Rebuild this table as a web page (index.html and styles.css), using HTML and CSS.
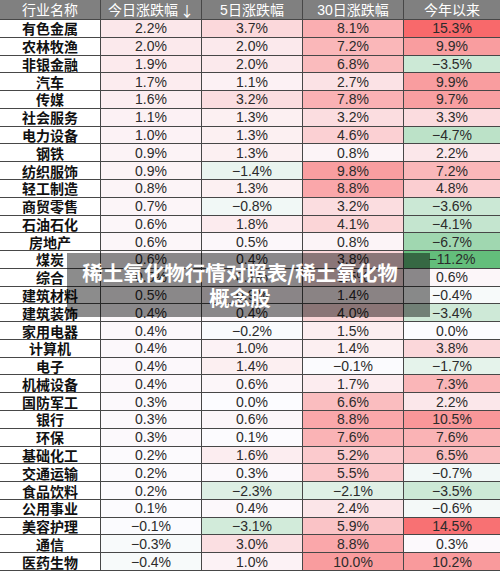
FILE: index.html
```html
<!DOCTYPE html>
<html lang="zh-CN">
<head>
<meta charset="utf-8">
<title>稀土氧化物行情对照表</title>
<link rel="stylesheet" href="styles.css">
</head>
<body>
<div class="page">
  <div class="table" id="table">
    <div class="cell head">行业名称</div>
    <div class="cell head">今日涨跌幅<span class="arrow">↓</span></div>
    <div class="cell head">5日涨跌幅</div>
    <div class="cell head">30日涨跌幅</div>
    <div class="cell head last">今年以来</div>
  </div>
  <div class="title">
    <span>稀土氧化物行情对照表/稀土氧化物</span>
    <span>概念股</span>
  </div>
</div>
<script src="script.js"></script>
</body>
</html>
```

FILE: styles.css
```css
html, body {
  margin: 0;
  padding: 0;
  background: #ffffff;
}

.page {
  position: relative;
  width: 500px;
  height: 571px;
  overflow: hidden;
  font-family: "Liberation Sans", "Noto Sans CJK SC", sans-serif;
}

.table {
  display: grid;
  grid-template-columns: 101px 101px 101px 101px 96px;
  grid-template-rows: 20px repeat(31, 1fr);
  width: 500px;
  height: 571px;
}

.cell {
  box-sizing: border-box;
  display: flex;
  align-items: center;
  justify-content: center;
  border-right: 1px solid #474747;
  border-bottom: 1px solid #474747;
  font-size: 14px;
  color: #2b2b2b;
  white-space: nowrap;
  line-height: 1;
}

.cell.last {
  border-right: none;
}

.head {
  background: #808080;
  color: #ffffff;
}

.arrow {
  font-family: "Noto Sans CJK SC", sans-serif;
  margin-left: 2px;
}

.name {
  font-family: "Noto Sans CJK SC", sans-serif;
  font-weight: 700;
  color: #111111;
}

.title {
  position: absolute;
  left: 67px;
  top: 253px;
  width: 363px;
  height: 64px;
  box-sizing: border-box;
  padding-right: 17px;
  background: rgba(0, 0, 0, 0.45);
  display: flex;
  flex-direction: column;
  align-items: center;
  justify-content: center;
  color: #ffffff;
  font-family: "Noto Sans CJK SC", sans-serif;
  font-weight: 700;
  font-size: 20.5px;
  line-height: 25px;
  white-space: nowrap;
}
```

FILE: script.js
```js
(function () {
  var rows = [
    ["有色金属", 2.2, 3.7, 8.1, 15.3],
    ["农林牧渔", 2.0, 2.0, 7.2, 9.9],
    ["非银金融", 1.9, 2.0, 6.8, -3.5],
    ["汽车", 1.7, 1.1, 2.7, 9.9],
    ["传媒", 1.6, 3.2, 7.8, 9.7],
    ["社会服务", 1.1, 1.3, 3.2, 3.3],
    ["电力设备", 1.0, 1.3, 4.6, -4.7],
    ["钢铁", 0.9, 1.3, 0.8, 2.2],
    ["纺织服饰", 0.9, -1.4, 9.8, 7.2],
    ["轻工制造", 0.8, 1.3, 8.8, 4.8],
    ["商贸零售", 0.7, -0.8, 3.2, -3.6],
    ["石油石化", 0.6, 1.8, 4.1, -4.1],
    ["房地产", 0.6, 0.5, 0.8, -6.7],
    ["煤炭", 0.6, 0.4, 3.8, -11.2],
    ["综合", 0.5, 0.7, 3.5, 0.6],
    ["建筑材料", 0.5, 0.9, 1.4, -0.4],
    ["建筑装饰", 0.4, 0.4, 4.0, -3.4],
    ["家用电器", 0.4, -0.2, 1.5, 0.0],
    ["计算机", 0.4, 1.0, 1.4, 3.8],
    ["电子", 0.4, 1.4, -0.1, -1.7],
    ["机械设备", 0.4, 0.6, 1.7, 7.3],
    ["国防军工", 0.3, 0.0, 6.6, 2.2],
    ["银行", 0.3, 0.6, 8.8, 10.5],
    ["环保", 0.3, 0.1, 7.6, 7.6],
    ["基础化工", 0.2, 1.6, 5.2, 6.5],
    ["交通运输", 0.2, 0.3, 5.5, -0.7],
    ["食品饮料", 0.2, -2.3, -2.1, -3.5],
    ["公用事业", 0.1, 0.4, 2.4, -0.6],
    ["美容护理", -0.1, -3.1, 5.9, 14.5],
    ["通信", -0.3, 3.0, 8.8, 0.3],
    ["医药生物", -0.4, 1.0, 10.0, 10.2]
  ];

  var min = -11.2, max = 15.3;
  var white = [252, 252, 255], red = [248, 105, 107], green = [99, 190, 123];

  function mix(a, b, t) {
    return "rgb(" + a.map(function (v, i) {
      return Math.round(v + (b[i] - v) * t);
    }).join(",") + ")";
  }

  function colour(v) {
    if (v >= 0) return mix(white, red, v / max);
    return mix(white, green, v / min);
  }

  function fmt(v) {
    var s = Math.abs(v).toFixed(1) + "%";
    return v < 0 ? "\u2212" + s : s;
  }

  var table = document.getElementById("table");
  rows.forEach(function (r) {
    var n = document.createElement("div");
    n.className = "cell name";
    n.textContent = r[0];
    table.appendChild(n);
    for (var i = 1; i < 5; i++) {
      var c = document.createElement("div");
      c.className = "cell" + (i === 4 ? " last" : "");
      c.textContent = fmt(r[i]);
      c.style.backgroundColor = colour(r[i]);
      table.appendChild(c);
    }
  });
})();
```
